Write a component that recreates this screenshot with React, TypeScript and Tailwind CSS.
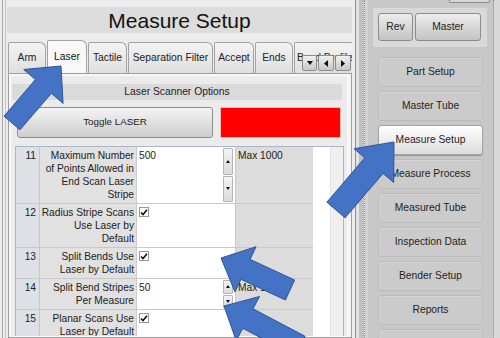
import React from 'react';

type Pt = [number, number];

// block arrow polygon from tip back to the flat tail end
function arrowPoints(tip: Pt, tail: Pt, shaftW: number, headW: number, headL: number) {
  const dx = tail[0] - tip[0];
  const dy = tail[1] - tip[1];
  const len = Math.hypot(dx, dy);
  const ux = dx / len;
  const uy = dy / len;
  const nx = -uy;
  const ny = ux;
  const bx = tip[0] + ux * headL;
  const by = tip[1] + uy * headL;
  const pts: Pt[] = [
    tip,
    [bx + (nx * headW) / 2, by + (ny * headW) / 2],
    [bx + (nx * shaftW) / 2, by + (ny * shaftW) / 2],
    [tail[0] + (nx * shaftW) / 2, tail[1] + (ny * shaftW) / 2],
    [tail[0] - (nx * shaftW) / 2, tail[1] - (ny * shaftW) / 2],
    [bx - (nx * shaftW) / 2, by - (ny * shaftW) / 2],
    [bx - (nx * headW) / 2, by - (ny * headW) / 2],
  ];
  return pts.map((p) => `${p[0].toFixed(1)},${p[1].toFixed(1)}`).join(' ');
}

const arrows = [
  arrowPoints([61, 66], [12, 123], 21, 52, 27),
  arrowPoints([394, 142], [336, 210], 24, 52, 31),
  arrowPoints([221, 258], [290, 290], 22, 50, 27),
  arrowPoints([224, 306], [300, 346], 22, 50, 27),
];

const tabs = [
  { label: 'Arm', w: 'w-[38px]' },
  { label: 'Laser', w: 'w-[40px]', active: true },
  { label: 'Tactile', w: 'w-[39px]' },
  { label: 'Separation Filter', w: 'w-[85px]' },
  { label: 'Accept', w: 'w-[40px]' },
  { label: 'Ends', w: 'w-[38px]' },
  { label: 'Bend Profile', w: 'w-[62px]' },
];

const rows = [
  { n: '11', lines: ['Maximum Number', 'of Points Allowed in', 'End Scan Laser', 'Stripe'], value: '500', max: 'Max 1000' },
  { n: '12', lines: ['Radius Stripe Scans', 'Use Laser by', 'Default'], check: true },
  { n: '13', lines: ['Split Bends Use', 'Laser by Default'], check: true },
  { n: '14', lines: ['Split Bend Stripes', 'Per Measure'], value: '50', max: 'Max 1000' },
  { n: '15', lines: ['Planar Scans Use', 'Laser by Default'], check: true },
];

const nav = [
  'Part Setup',
  'Master Tube',
  'Measure Setup',
  'Measure Process',
  'Measured Tube',
  'Inspection Data',
  'Bender Setup',
  'Reports',
  '',
];

function Tri({ dir }: { dir: 'up' | 'down' | 'left' | 'right' }) {
  const d = {
    up: 'M0,4 L3,0 L6,4 Z',
    down: 'M0,0 L6,0 L3,4 Z',
    left: 'M4,0 L4,7 L0,3.5 Z',
    right: 'M0,0 L0,7 L4,3.5 Z',
  }[dir];
  const horiz = dir === 'left' || dir === 'right';
  return (
    <svg width={horiz ? 4 : 6} height={horiz ? 7 : 4} viewBox={horiz ? '0 0 4 7' : '0 0 6 4'}>
      <path d={d} fill="#111" />
    </svg>
  );
}

function Spinner() {
  return (
    <div className="absolute top-[1px] bottom-[1px] right-[2px] w-[10px] flex flex-col gap-[1px]">
      <div className="flex-1 flex items-center justify-center bg-gradient-to-b from-[#f4f4f4] to-[#dadada] border border-[#b4b4b4] rounded-[1px]">
        <svg width="4" height="3" viewBox="0 0 4 3"><path d="M0,3 L2,0 L4,3 Z" fill="#111" /></svg>
      </div>
      <div className="flex-1 flex items-center justify-center bg-gradient-to-b from-[#f4f4f4] to-[#dadada] border border-[#b4b4b4] rounded-[1px]">
        <svg width="4" height="3" viewBox="0 0 4 3"><path d="M0,0 L4,0 L2,3 Z" fill="#111" /></svg>
      </div>
    </div>
  );
}

function Check() {
  return (
    <div className="mt-[1px] w-[10px] h-[10px] bg-white border border-[#9a9a9a] flex items-center justify-center">
      <svg width="8" height="7" viewBox="0 0 8 7">
        <path d="M1,3.5 L3,5.5 L7,0.8" fill="none" stroke="#111" strokeWidth="1.6" />
      </svg>
    </div>
  );
}

export default function App() {
  return (
    <div
      className="relative w-[500px] h-[338px] overflow-hidden flex bg-[#ececec] text-[#222]"
      style={{ fontFamily: '"Liberation Sans", Arial, sans-serif' }}
    >
      {/* left: measure setup page */}
      <div className="w-[356px] h-full flex border-r border-[#8e8e8e]">
        <div className="w-[2px]" />
        <div className="w-px bg-[#a8a8a8]" />
        <div className="w-[2px]" />
        <div className="w-px bg-[#c6c6c6]" />
        <div className="w-px" />
        <div className="w-[345px] h-full flex flex-col">
          <div className="shrink-0 mt-[7px] h-[26px] bg-[#dcdcdc] flex items-center justify-center text-[21px] text-[#111] leading-none">
            Measure Setup
          </div>

          {/* tab strip */}
          <div className="shrink-0 mt-[7px] ml-[1px] w-[344px] h-[33px] relative flex items-end gap-[1px] overflow-hidden">
            {tabs.map((t) => (
              <div
                key={t.label}
                className={`${t.w} shrink-0 flex items-center justify-center whitespace-nowrap text-[10.3px] border border-b-0 border-[#a2a2a2] rounded-tl-[2px] rounded-tr-[6px] ${
                  t.active ? 'h-[33px] bg-[#f8f8f8] text-[#111]' : 'h-[31px] bg-gradient-to-b from-[#f3f3f3] to-[#dfdfdf]'
                }`}
              >
                {t.label}
              </div>
            ))}
            <div className="absolute top-[15px] right-[1px] flex gap-[1px]">
              {(['down', 'left', 'right'] as const).map((d, i) => (
                <div
                  key={d}
                  className={`${i === 0 ? 'w-[15px]' : 'w-[16px]'} h-[16px] flex items-center justify-center bg-gradient-to-b from-[#f0f0f0] to-[#c8c8c8] border border-[#8c8c8c] rounded-[2px]`}
                >
                  <Tri dir={d} />
                </div>
              ))}
            </div>
          </div>

          {/* tab content */}
          <div className="ml-[1px] w-[344px] flex-1 min-h-0 border border-[#9e9e9e] bg-[#f4f4f4] pl-[1px] pt-[1px] pr-[3px] overflow-hidden">
            <div className="h-full border border-[#fbfbfb] bg-[#ebebeb] flex flex-col">
              <div className="shrink-0 mt-[8px] ml-[1px] w-[330px] h-[16px] bg-[#dadada] flex items-center justify-center text-[10.3px]">
                Laser Scanner Options
              </div>
              <div className="shrink-0 mt-[7px] ml-[6px] h-[31px] flex gap-[7px]">
                <div className="w-[196px] flex items-center justify-center text-[9.8px] bg-gradient-to-b from-[#f4f4f4] to-[#cdcdcd] border border-[#8d8d8d] rounded-[3px]">
                  Toggle LASER
                </div>
                <div className="w-[121px] bg-[#ff0000] border border-[#f3b9b9]" />
              </div>

              {/* property grid */}
              <div className="mt-[8px] ml-[4px] w-[329px] flex-1 min-h-0 flex border-l border-t border-r border-[#aab6c8] bg-white overflow-hidden text-[10.2px] leading-[13px]">
                <div className="w-[297px] flex flex-col">
                  {rows.map((r) => (
                    <div key={r.n} className="shrink-0 flex border-b border-[#c9c9c9]">
                      <div className="w-[24px] bg-[#dde1e6] border-r border-[#c6c6c6] text-right pr-[3px] pt-[2px] pb-[2px]">
                        {r.n}
                      </div>
                      <div className="w-[97px] bg-[#e1e1e1] border-r border-[#cbcbcb] text-right pr-[2px] pt-[2px] pb-[2px]">
                        {r.lines.map((l) => (
                          <div key={l} className="whitespace-nowrap">{l}</div>
                        ))}
                      </div>
                      <div className="w-[98px] relative bg-white pl-[2px] pt-[2px] pb-[2px]">
                        {r.value && <div>{r.value}</div>}
                        {r.value && <Spinner />}
                        {r.check && <Check />}
                      </div>
                      <div className="w-[78px] bg-[#dcdcdc] border-l border-[#c9c9c9] pl-[2px] pt-[2px] pb-[2px] whitespace-nowrap">
                        {r.max}
                      </div>
                    </div>
                  ))}
                </div>
                <div className="w-[17px] bg-white" />
                <div className="w-[13px] bg-[#efefef] border-l border-[#e2e2e2]" />
              </div>
            </div>
          </div>
        </div>
      </div>

      {/* splitter */}
      <div className="w-[12px] h-full flex">
        <div className="w-[3px] bg-[#e2e2e2]" />
        <div className="w-[5px] bg-[#c0c0c0]" />
        <div className="w-px border-l border-dotted border-[#8a8a8a]" />
        <div className="w-[3px] bg-[#d2d2d2]" />
      </div>

      {/* right: navigation */}
      <div className="flex-1 h-full flex bg-[#c8c8c8]">
        <div className="w-[125px] flex flex-col">
          <div className="shrink-0 h-[8px] pl-[81px]">
            <div className="w-[41px] h-[3px] bg-[#d6d6d6] border-x border-b border-[#8c8c8c] rounded-b-[2px]" />
          </div>
          <div className="shrink-0 ml-[5px] w-[114px] h-[39px] bg-[#d9d9d9] pl-[5px] pt-[5px] flex gap-[2px] text-[10.3px]">
            <div className="w-[35px] h-[28px] flex items-center justify-center bg-gradient-to-b from-[#ededed] to-[#c3c3c3] border border-[#8c8c8c] rounded-[3px]">
              Rev
            </div>
            <div className="w-[66px] h-[28px] flex items-center justify-center bg-gradient-to-b from-[#ededed] to-[#c3c3c3] border border-[#8c8c8c] rounded-[3px]">
              Master
            </div>
          </div>
          <div className="shrink-0 mt-[10px] ml-[10px] w-[105px] flex flex-col gap-[4px] text-[10.3px] text-[#1e1e1e]">
            {nav.map((label, i) => (
              <div
                key={i}
                className={`h-[30px] shrink-0 flex items-center justify-center rounded-[3px] border ${
                  label === 'Measure Setup'
                    ? 'bg-gradient-to-b from-white to-[#dcdcdc] border-[#a4a4a4] shadow-[0_1px_1px_rgba(0,0,0,0.25)]'
                    : 'bg-[#cbcbcb] border-[#bcbcbc] shadow-[inset_1px_1px_0_#d4d4d4]'
                }`}
              >
                {label}
              </div>
            ))}
          </div>
        </div>
        <div className="w-px border-l border-dotted border-[#8a8a8a]" />
        <div className="flex-1 bg-[#d8d8d8]" />
      </div>

      {/* callout arrows */}
      <svg className="absolute inset-0 pointer-events-none" width="500" height="338" viewBox="0 0 500 338">
        {arrows.map((p, i) => (
          <polygon key={i} points={p} fill="#4472c4" stroke="#2f5597" strokeWidth="1" />
        ))}
      </svg>
    </div>
  );
}
